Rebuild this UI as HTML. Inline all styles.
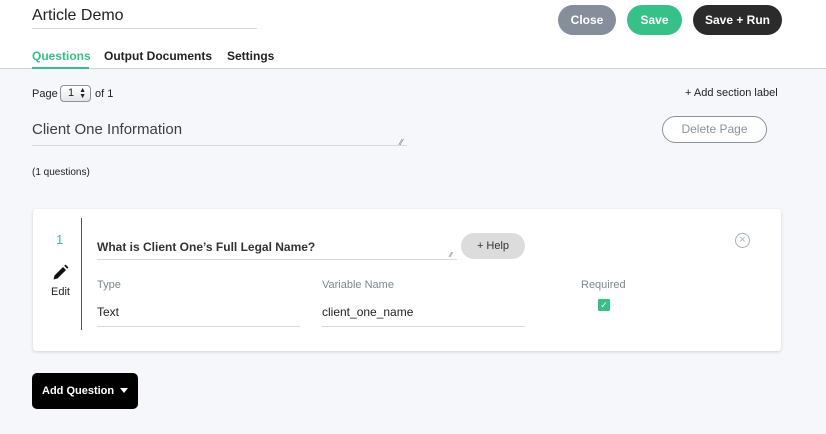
<!DOCTYPE html>
<html><head><meta charset="utf-8"><style>
*{box-sizing:border-box;margin:0;padding:0}
body{width:826px;height:434px;overflow:hidden;background:#f6f7fb;font-family:"Liberation Sans",sans-serif;color:#222;position:relative}
.a{position:absolute}
.hdr{left:0;top:0;width:826px;height:69px;background:#fff;border-bottom:1px solid #cfd2d6}
.btn{border-radius:15px;color:#fff;font-weight:bold;font-size:12px;text-align:center;line-height:30px;height:30px}
.ul{border-bottom:1px solid #d6d9de}
.lbl{font-size:11px;color:#7d8794}
</style></head><body>
<div class="a hdr"></div>
<div class="a" style="left:32px;top:7px;font-size:16px;color:#222">Article Demo</div>
<div class="a ul" style="left:32px;top:28px;width:225px"></div>
<div class="a btn" style="left:558px;top:5px;width:58px;background:#858e9a">Close</div>
<div class="a btn" style="left:627px;top:5px;width:55px;background:#37c087">Save</div>
<div class="a btn" style="left:693px;top:5px;width:89px;background:#2b2b2b">Save + Run</div>
<div class="a" style="left:32px;top:49px;font-size:12px;font-weight:bold;color:#37c087">Questions</div>
<div class="a" style="left:32px;top:67px;width:57px;height:2px;background:#37c087"></div>
<div class="a" style="left:104px;top:49px;font-size:12px;font-weight:bold">Output Documents</div>
<div class="a" style="left:227px;top:49px;font-size:12px;font-weight:bold">Settings</div>

<div class="a" style="left:32px;top:88px;font-size:11px">Page</div>
<div class="a" style="left:60px;top:85px;width:31px;height:17px;border:1px solid #8b929b;border-radius:4px;background:linear-gradient(#fff,#e4e6ea);font-size:11px;padding-left:7px;line-height:15px">1<span style="position:absolute;right:4px;font-size:7px;line-height:6px;top:2px">▲<br>▼</span></div>
<div class="a" style="left:95px;top:88px;font-size:11px">of 1</div>
<div class="a" style="left:685px;top:87px;font-size:11px">+ Add section label</div>

<div class="a" style="left:32px;top:121px;font-size:15px;color:#3a3f47">Client One Information</div>
<div class="a ul" style="left:32px;top:145px;width:375px"></div>
<div class="a" style="left:400px;top:138px;font-size:8px;color:#666">⁄⁄</div>
<div class="a" style="left:662px;top:116px;width:105px;height:27px;border:1px solid #8b929b;border-radius:14px;font-size:12px;color:#8b929b;text-align:center;line-height:25px;background:#fff">Delete Page</div>
<div class="a" style="left:32px;top:167px;font-size:10px">(1 questions)</div>

<div class="a" style="left:33px;top:209px;width:748px;height:142px;background:#fff;border-radius:3px;box-shadow:0 1px 3px rgba(0,0,0,.15)"></div>
<div class="a" style="left:56px;top:232px;font-size:13px;color:#37c087">1</div>
<svg class="a" style="left:52px;top:264px" width="17" height="17" viewBox="0 0 17 17"><path d="M1.5 15.5l1-4L11 3l3 3-8.5 8.5z M12.2 1.8l1.3-1.3 3 3-1.3 1.3z" fill="#111"/></svg>
<div class="a" style="left:51px;top:286px;font-size:11px">Edit</div>
<div class="a" style="left:81px;top:218px;width:1px;height:112px;background:#555"></div>
<div class="a" style="left:97px;top:240px;font-size:12px;font-weight:bold;color:#333">What is Client One’s Full Legal Name?</div>
<div class="a ul" style="left:97px;top:259px;width:360px"></div>
<div class="a" style="left:450px;top:252px;font-size:7px;color:#666">⁄⁄</div>
<div class="a" style="left:461px;top:233px;width:64px;height:26px;border-radius:13px;background:#dcdcdc;font-size:11px;text-align:center;line-height:26px;color:#333">+ Help</div>
<div class="a" style="left:735px;top:233px;width:15px;height:15px;border:1px solid #a9b2bd;border-radius:50%;color:#a9b2bd;font-size:11px;text-align:center;line-height:13px">×</div>
<div class="a lbl" style="left:97px;top:279px">Type</div>
<div class="a lbl" style="left:322px;top:279px">Variable Name</div>
<div class="a lbl" style="left:581px;top:279px">Required</div>
<div class="a" style="left:97px;top:305px;font-size:12px">Text</div>
<div class="a ul" style="left:97px;top:326px;width:203px"></div>
<div class="a" style="left:322px;top:305px;font-size:12px">client_one_name</div>
<div class="a ul" style="left:322px;top:326px;width:203px"></div>
<div class="a" style="left:598px;top:299px;width:12px;height:12px;background:#37c087;border-radius:1px;color:#fff;font-size:9px;text-align:center;line-height:12px">✓</div>

<div class="a" style="left:32px;top:373px;width:106px;height:36px;background:#000;border-radius:5px;color:#fff;font-size:11px;font-weight:bold;line-height:36px;padding-left:10px">Add Question</div>
<div class="a" style="left:120px;top:388px;width:0;height:0;border-left:4px solid transparent;border-right:4px solid transparent;border-top:5px solid #fff"></div>
</body></html>
